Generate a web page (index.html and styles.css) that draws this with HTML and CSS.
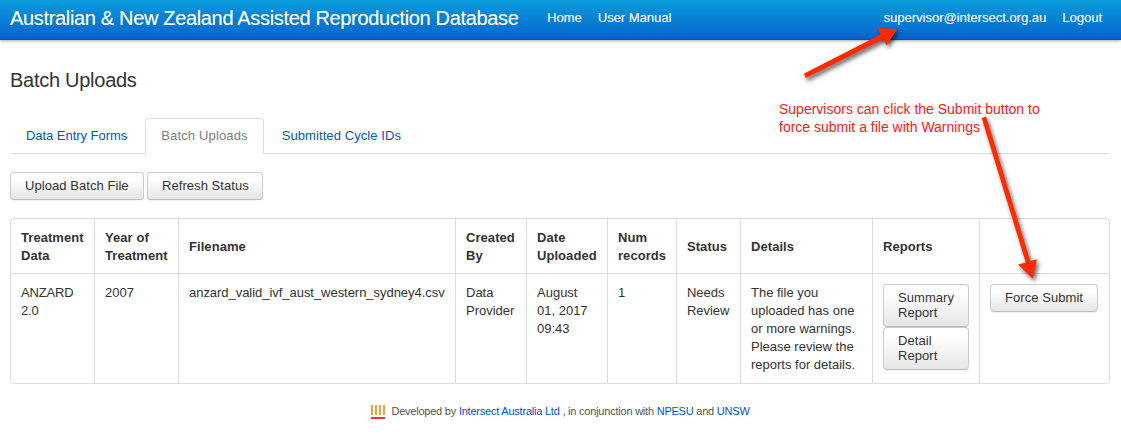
FILE: index.html
```html
<!DOCTYPE html>
<html lang="en">
<head>
<meta charset="utf-8">
<title>Batch Uploads</title>
<link rel="stylesheet" href="styles.css">
</head>
<body>
<header class="topbar">
  <a class="brand">Australian &amp; New Zealand Assisted Reproduction Database</a>
  <nav class="nav"><a>Home</a><a>User Manual</a></nav>
  <nav class="nav nav-user"><a class="email">supervisor@intersect.org.au</a><a>Logout</a></nav>
</header>
<main class="content">
  <h1 class="title">Batch Uploads</h1>
  <ul class="tabs">
    <li><a class="tab tab-forms">Data Entry Forms</a></li>
    <li><a class="tab active">Batch Uploads</a></li>
    <li><a class="tab">Submitted Cycle IDs</a></li>
  </ul>
  <div class="actions"><a class="btn btn-upload">Upload Batch File</a><a class="btn btn-refresh">Refresh Status</a></div>
  <table class="uploads">
    <colgroup><col class="c1"><col class="c2"><col class="c3"><col class="c4"><col class="c5"><col class="c6"><col class="c7"><col class="c8"><col class="c9"><col></colgroup>
    <thead>
      <tr><th>Treatment<br>Data</th><th>Year of<br>Treatment</th><th>Filename</th><th>Created<br>By</th><th>Date<br>Uploaded</th><th>Num<br>records</th><th>Status</th><th>Details</th><th>Reports</th><th></th></tr>
    </thead>
    <tbody>
      <tr>
        <td class="version">ANZARD<br>2.0</td><td>2007</td><td class="file">anzard_valid_ivf_aust_western_sydney4.csv</td><td>Data<br>Provider</td><td>August<br>01, 2017<br>09:43</td><td>1</td><td class="status">Needs<br>Review</td>
        <td>The file you<br>uploaded has one<br>or more warnings.<br>Please review the<br>reports for details.</td>
        <td><a class="btn btn-report">Summary<br>Report</a><a class="btn btn-report">Detail<br>Report</a></td>
        <td><a class="btn btn-force">Force Submit</a></td>
      </tr>
    </tbody>
  </table>
</main>
<footer class="footer">
  <svg class="logo" width="15" height="14" viewBox="0 0 15 14"><path d="M1 0v10M5 0v10M9 0v10M13 0v10" stroke="#f2a140" stroke-width="2"/><path d="M0 13h14" stroke="#e23b2e" stroke-width="2"/></svg>
  <span class="credit">Developed by <a>Intersect Australia Ltd</a> , in conjunction with <a>NPESU</a> and <a>UNSW</a></span>
</footer>
<p class="note">Supervisors can click the Submit button to<br>force submit a file with Warnings</p>
<svg class="arrows" width="1121" height="438" viewBox="0 0 1121 438">
  <path d="M803.7 73.7L880.4 34.5L877.3 27.7L897.2 29.2L886.7 45.3L883.2 39.3L806 77.9Z"/>
  <path d="M981.7 117.9L986.1 116.6L1030.2 261L1037 259.2L1032.7 278.5L1018 264.4L1025.8 262.6Z"/>
</svg>
</body>
</html>
```
FILE: styles.css
```css
body {
  margin: 0;
  background: #fff;
  color: #333;
  font: 13px/18px "Liberation Sans", Arial, sans-serif;
}
a { color: #0055d4; text-decoration: none; }
.topbar {
  display: flex;
  box-sizing: border-box;
  height: 40px;
  padding: 0 19px 0 10px;
  background: linear-gradient(#0a9cdb, #0463cb);
  border-bottom: 1px solid #0a55ae;
  box-shadow: 0 1px 3px rgba(0, 0, 0, .35);
  white-space: nowrap;
}
.brand {
  width: 509px;
  color: #fff;
  font-size: 20px;
  line-height: 36px;
  letter-spacing: -.335px;
  text-shadow: 0 0 .5px rgba(255, 255, 255, .5);
}
.nav { display: flex; gap: 16px; margin-left: 28px; line-height: 35px; }
.nav a { color: #e8f1f9; text-shadow: .3px 0 .4px rgba(255, 255, 255, .7); }
.nav-user { margin-left: auto; }
.content { padding: 30px 11px 0 10px; }
.title { margin: 0; font-size: 20px; font-weight: 400; line-height: 20px; letter-spacing: -.27px; }
.tabs {
  display: flex;
  gap: 2px;
  margin: 28px 0 18px;
  padding: 0;
  list-style: none;
  border-bottom: 1px solid #ddd;
}
.tab {
  display: block;
  margin-bottom: -1px;
  padding: 8px 15px 9px;
  border: 1px solid transparent;
  border-bottom: 0;
  border-radius: 4px 4px 0 0;
  letter-spacing: .08px;
  white-space: nowrap;
}
.tab-forms { letter-spacing: -.04px; }
.tab.active { color: #808080; background: #fff; border-color: #ddd; letter-spacing: .15px; }
.actions { display: flex; gap: 3px; margin-bottom: 18px; }
.btn {
  display: block;
  box-sizing: border-box;
  padding: 5px 0 6px 14px;
  color: #333;
  line-height: 15px;
  letter-spacing: .06px;
  white-space: nowrap;
  background: linear-gradient(#fff, #fefefe 25%, #e6e6e6);
  border: 1px solid #ccc;
  border-bottom-color: #bbb;
  border-radius: 4px;
  box-shadow: 0 1px 2px rgba(0, 0, 0, .05);
}
.btn-upload { width: 134px; }
.btn-refresh { width: 116px; }
.btn-report { width: 86px; }
.btn-force { width: 108px; }
.uploads {
  width: 1100px;
  table-layout: fixed;
  border: 1px solid #ddd;
  border-collapse: separate;
  border-spacing: 0;
  border-radius: 4px;
}
.uploads th, .uploads td { padding: 10px 0 9px 10px; text-align: left; vertical-align: top; white-space: nowrap; }
.uploads th { padding-bottom: 8px; font-weight: 700; vertical-align: middle; letter-spacing: .06px; }
.uploads td { border-top: 1px solid #ddd; }
.uploads .file { letter-spacing: -.04px; }
.uploads .version { letter-spacing: -.15px; }
.uploads .status { letter-spacing: -.05px; }
.uploads th + th, .uploads td + td { border-left: 1px solid #ddd; }
.c1 { width: 83px; }
.c2 { width: 84px; }
.c3 { width: 277px; }
.c4 { width: 71px; }
.c5 { width: 81px; }
.c6 { width: 69px; }
.c7 { width: 64px; }
.c8 { width: 132px; }
.c9 { width: 107px; }
.footer {
  display: flex;
  justify-content: center;
  gap: 5px;
  margin-top: 18px;
  color: #555;
  font-size: 11px;
  letter-spacing: -.22px;
}
.logo { margin-top: 3px; }
.note {
  position: absolute;
  left: 779px;
  top: 100px;
  margin: 0;
  color: #fb2016;
  font-size: 14px;
  white-space: nowrap;
}
.arrows {
  position: absolute;
  left: 0;
  top: 0;
  fill: #ff2a00;
  filter: drop-shadow(2px 3px 2px rgba(0, 0, 0, .6));
  pointer-events: none;
}
```
